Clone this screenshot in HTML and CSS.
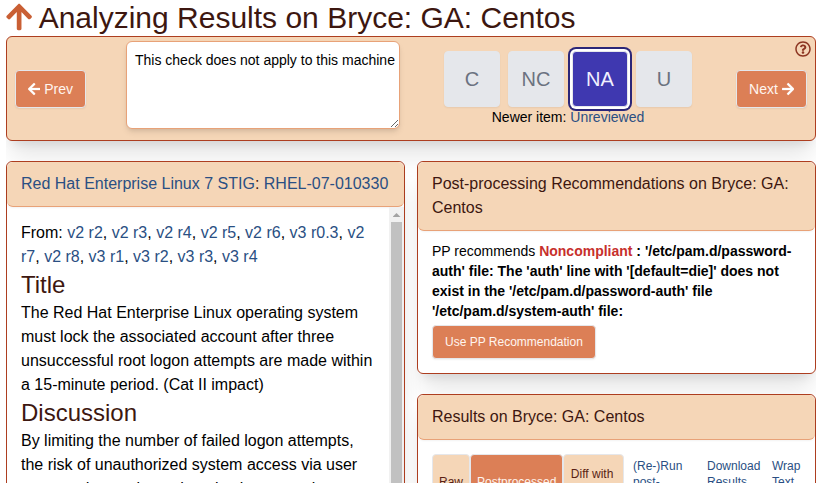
FILE: index.html
```html
<!DOCTYPE html>
<html lang="en">
<head>
<meta charset="utf-8">
<title>Analyzing Results on Bryce: GA: Centos</title>
<link rel="stylesheet" href="styles.css">
</head>
<body>
<main class="page">
  <h1 class="page-title"><a href="#" class="up"><svg class="icon" viewBox="0 0 448 512"><path d="M34.9 289.5l-22.2-22.2c-9.4-9.4-9.4-24.6 0-33.9L207 39c9.4-9.4 24.6-9.4 33.9 0l194.3 194.3c9.4 9.4 9.4 24.6 0 33.9L413 289.4c-9.5 9.5-25 9.3-34.3-.4L264 168.6V456c0 13.3-10.7 24-24 24h-32c-13.3 0-24-10.7-24-24V168.6L69.2 289.1c-9.3 9.8-24.8 10-34.3.4z"/></svg></a>Analyzing Results on Bryce: GA: Centos</h1>

  <section class="toolbar">
    <button class="btn nav prev"><svg class="icon" viewBox="0 0 448 512"><path d="M257.5 445.1l-22.2 22.2c-9.4 9.4-24.6 9.4-33.9 0L7 273c-9.4-9.4-9.4-24.6 0-33.9L201.4 44.7c9.4-9.4 24.6-9.4 33.9 0l22.2 22.2c9.5 9.5 9.3 25-.4 34.3L136.6 216H424c13.3 0 24 10.7 24 24v32c0 13.3-10.7 24-24 24H136.6l120.5 114.8c9.8 9.3 10 24.8.4 34.3z"/></svg> Prev</button>
    <textarea class="comment">This check does not apply to this machine</textarea>
    <div class="status">
      <div class="choices">
        <button class="choice">C</button>
        <button class="choice">NC</button>
        <button class="choice selected">NA</button>
        <button class="choice">U</button>
      </div>
      <div class="newer">Newer item: <a href="#">Unreviewed</a></div>
    </div>
    <button class="btn nav next">Next <svg class="icon" viewBox="0 0 448 512"><path d="M190.5 66.9l22.2-22.2c9.4-9.4 24.6-9.4 33.9 0L441 239c9.4 9.4 9.4 24.6 0 33.9L246.6 467.3c-9.4 9.4-24.6 9.4-33.9 0l-22.2-22.2c-9.5-9.5-9.3-25 .4-34.3L311.4 296H24c-13.3 0-24-10.7-24-24v-32c0-13.3 10.7-24 24-24h287.4L190.9 101.2c-9.8-9.3-10-24.8-.4-34.3z"/></svg></button>
    <a href="#" class="help"><svg viewBox="0 0 512 512"><path d="M256 8C119.043 8 8 119.083 8 256c0 136.997 111.043 248 248 248s248-111.003 248-248C504 119.083 392.957 8 256 8zm0 448c-110.532 0-200-89.431-200-200 0-110.495 89.472-200 200-200 110.491 0 200 89.471 200 200 0 110.53-89.431 200-200 200zm107.244-255.2c0 67.052-72.421 68.084-72.421 92.863V300c0 6.627-5.373 12-12 12h-45.647c-6.627 0-12-5.373-12-12v-8.659c0-35.745 27.1-50.034 47.579-61.516 17.561-9.845 28.324-16.541 28.324-29.579 0-17.246-21.999-28.693-39.784-28.693-23.189 0-33.894 10.977-48.942 29.969-4.057 5.12-11.46 6.071-16.666 2.124l-27.824-21.098c-5.107-3.872-6.251-11.066-2.644-16.363C184.846 131.491 214.94 112 261.794 112c49.071 0 101.45 38.304 101.45 88.8zM298 368c0 23.159-18.841 42-42 42s-42-18.841-42-42 18.841-42 42-42 42 18.841 42 42z"/></svg></a>
  </section>

  <div class="columns">
    <section class="card rule">
      <header class="card-head"><a href="#">Red Hat Enterprise Linux 7 STIG</a>: <a href="#">RHEL-07-010330</a></header>
      <div class="scroll">
        <div class="rule-text">
          <p>From: <a href="#">v2 r2</a>, <a href="#">v2 r3</a>, <a href="#">v2 r4</a>, <a href="#">v2 r5</a>, <a href="#">v2 r6</a>, <a href="#">v3 r0.3</a>, <a href="#">v2 r7</a>, <a href="#">v2 r8</a>, <a href="#">v3 r1</a>, <a href="#">v3 r2</a>, <a href="#">v3 r3</a>, <a href="#">v3 r4</a></p>
          <h2>Title</h2>
          <p>The Red Hat Enterprise Linux operating system must lock the associated account after three unsuccessful root logon attempts are made within a 15-minute period. (Cat II impact)</p>
          <h2>Discussion</h2>
          <p>By limiting the number of failed logon attempts, the risk of unauthorized system access via user password guessing, otherwise known as brute-forcing, is reduced.</p>
        </div>
        <div class="track"><span class="track-up"></span><span class="thumb"></span></div>
      </div>
    </section>

    <div class="stack">
      <section class="card">
        <header class="card-head">Post-processing Recommendations on Bryce: GA: Centos</header>
        <div class="recommend">
          <p>PP recommends <strong><span class="bad">Noncompliant</span> : '/etc/pam.d/password-auth' file: The 'auth' line with '[default=die]' does not exist in the '/etc/pam.d/password-auth' file '/etc/pam.d/system-auth' file:</strong></p>
          <button class="btn small">Use PP Recommendation</button>
        </div>
      </section>

      <section class="card">
        <header class="card-head">Results on Bryce: GA: Centos</header>
        <div class="results">
          <div class="tabs">
            <button class="tab">Raw</button>
            <button class="tab active">Postprocessed</button>
            <button class="tab">Diff with<br>previous</button>
          </div>
          <a href="#" class="rerun">(Re-)Run<br>post-<br>processor</a>
          <a href="#" class="download">Download<br>Results</a>
          <a href="#">Wrap<br>Text</a>
        </div>
      </section>
    </div>
  </div>
</main>
</body>
</html>
```
FILE: styles.css
```css
* { box-sizing: border-box; }
html, body { height: 100%; overflow: hidden; }
body {
  margin: 0;
  background: #fff;
  color: #000;
  font: 16px/24px "Liberation Sans", Arial, sans-serif;
}
h1, h2, p { margin: 0; font-weight: 400; }
a { color: #2a4f83; text-decoration: none; }
button { font: inherit; margin: 0; cursor: pointer; }

.page { margin-left: 6px; width: 810px; height: 483px; overflow: hidden; }
.page-title { font-size: 30px; line-height: 36px; color: #3d1710; white-space: nowrap; }
.up { color: #c95f34; margin-right: 6.4px; }
.icon { width: .875em; height: 1em; vertical-align: -.125em; fill: currentColor; }

.toolbar {
  position: relative;
  display: grid;
  grid-template-columns: 111px 274px 40px 256px 1fr;
  height: 105px;
  padding: 4px 8px 0;
  border: 1px solid #ad3e20;
  border-radius: 6px;
  background: #f5d6b7;
  box-shadow: 0 20px 25px -5px rgba(0,0,0,.1), 0 8px 10px -6px rgba(0,0,0,.1);
}
.btn {
  border: 1px solid #e5e7eb;
  border-radius: 4px;
  background: #dc7f56;
  color: #fff5ef;
  padding: 8px 12px;
  box-shadow: 0 1px 2px rgba(0,0,0,.06);
  white-space: nowrap;
}
.nav { font-size: 14px; line-height: 20px; height: 38px; margin-top: 29px; }
.nav .icon { fill: #fff; stroke: #fff; stroke-width: 8; }
.prev { justify-self: start; }
.next { grid-column: 5; justify-self: end; }
.comment {
  grid-column: 2;
  display: block;
  width: 274px;
  height: 88px;
  padding: 8px 0 8px 8px;
  border: 1px solid #e8a278;
  border-radius: 6px;
  outline: 0;
  background: #fff;
  color: #000;
  font: 14px/20px "Liberation Sans", Arial, sans-serif;
  box-shadow: 0 4px 6px -1px rgba(0,0,0,.1), 0 2px 4px -2px rgba(0,0,0,.1);
  resize: both;
  overflow: hidden;
}
.status { grid-column: 4; padding-top: 10px; text-align: center; }
.choices { display: flex; gap: 8px; padding: 0 4px; }
.choice {
  width: 56px;
  height: 56px;
  padding: 0;
  border: 1px solid #e5e7eb;
  border-radius: 4px;
  background: #e5e7eb;
  color: #6b7280;
  font-size: 20px;
  line-height: 28px;
  box-shadow: 0 1px 2px rgba(0,0,0,.06);
}
.selected {
  background: #3f38b0;
  color: #f1f0ff;
  box-shadow: 0 0 0 2px #fff, 0 0 0 4px #2b2678;
}
.newer { font-size: 14px; line-height: 20px; }
.help { position: absolute; top: 4px; right: 4px; width: 16px; height: 16px; color: #8c3521; }
.help svg { display: block; width: 16px; height: 16px; fill: currentColor; }

.columns { position: relative; display: grid; grid-template-columns: 399px 399px; gap: 12px; margin-top: 20px; }
.card {
  position: relative;
  border: 1px solid #ad3e20;
  border-radius: 6px;
  background: #fff;
  box-shadow: 0 20px 25px -5px rgba(0,0,0,.1), 0 8px 10px -6px rgba(0,0,0,.1);
}
.card-head {
  padding: 10px 14px;
  border-bottom: 1px solid #e8a278;
  border-radius: 6px;
  background: #f5d6b7;
  color: #3d1710;
  box-shadow: 0 1px 2px rgba(0,0,0,.05);
}
.rule { height: 600px; }
.scroll { display: flex; height: 550px; }
.rule-text { flex: 1; padding: 14px; }
.rule-text h2 { font-size: 24px; line-height: 32px; color: #3d1710; }
.track {
  display: flex;
  flex-direction: column;
  align-items: center;
  width: 15px;
  background: #f1f1f1;
}
.track-up {
  width: 8px;
  height: 4px;
  margin: 6px 0 5px;
  background: #a3a3a3;
  clip-path: polygon(50% 0, 100% 100%, 0 100%);
}
.thumb { width: 11px; flex: 1; background: #c1c1c1; }

.stack { display: flex; flex-direction: column; gap: 20px; }
.recommend { padding: 10px 14px 14px; font-size: 14px; line-height: 20px; }
.bad { color: #c72f2c; }
.small { display: block; margin-top: 4px; font-size: 12px; line-height: 16px; }
.results { display: flex; padding: 14px; font-size: 12px; line-height: 16px; }
.results > a { margin-top: 4px; white-space: nowrap; }
.tabs { display: flex; width: 191px; margin-right: 10px; }
.tab {
  height: 56px;
  padding: 0 6px;
  border: 1px solid #e5e7eb;
  border-radius: 4px;
  background: #f5d6b7;
  color: #591f14;
  font-size: 12px;
  line-height: 16px;
}
.tab:last-child { flex: 1; padding: 0 8px 0 5px; }
.tab.active { background: #dc7f56; color: #fff5ef; }
.rerun { width: 74px; }
.download { width: 65px; }
```
